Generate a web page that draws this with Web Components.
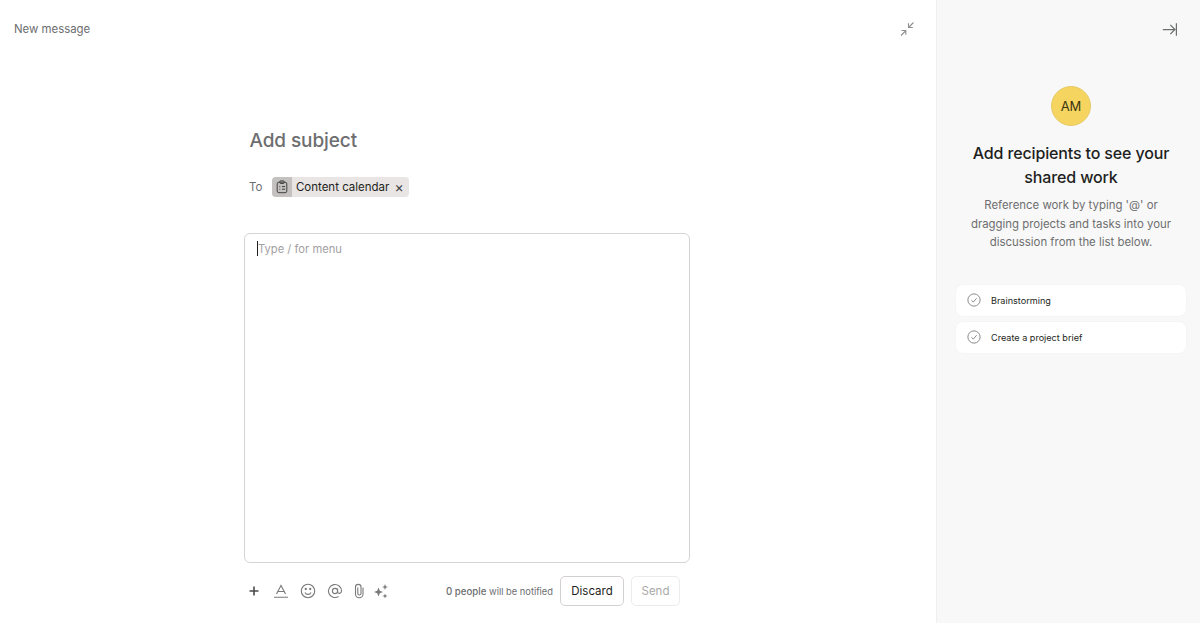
<!DOCTYPE html>
<html>
<head>
<meta charset="utf-8">
<title>New message</title>
<style>
    html, body { margin: 0; height: 100%; }
    body { font-family: Inter, "Liberation Sans", sans-serif; color: #1e1f21; overflow: hidden; }
</style>
</head>
<body>
<message-page>
    <message-composer></message-composer>
    <recipients-panel slot="side">
        <task-row>Brainstorming</task-row>
        <task-row>Create a project brief</task-row>
    </recipients-panel>
</message-page>

<script>
const icons = {
    collapse: '<path d="M2 14.5 6.5 10M2.5 9.5H6.8V13.8M14.5 1.5 10 6M9.5 2.2V6.5H13.8"/>',
    close: '<path d="M1 9H15M10 3.5 15.5 9 10 14.5M17.3 1.5V16.5" stroke-width="1.5"/>',
    clipboard: '<rect x="2.5" y="2.5" width="11" height="12" rx="2"/><rect x="5.5" y="1" width="5" height="3" rx="1"/><path d="M5 7.5H6M8 7.5H11.5M5 10.5H6M8 10.5H11.5"/>',
    plus: '<path d="M8 3.5V12.5M3.5 8H12.5" stroke-width="1.6"/>',
    format: '<path d="M3.5 11 8 2.5 12.5 11M5 8.5H11M1 14.3H15"/>',
    smile: '<circle cx="8" cy="8" r="6.7"/><path d="M5 9.5C6 12 10 12 11 9.5"/><circle cx="5.8" cy="6" r=".6"/><circle cx="10.2" cy="6" r=".6"/>',
    at: '<circle cx="8" cy="8" r="2.6"/><path d="M10.6 5.5V9C10.6 11 14.5 11 14.5 8A6.5 6.5 0 1 0 11.5 13.5"/>',
    clip: '<path d="M12 4.5V11C12 16 4.5 16 4.5 11V4C4.5 0.5 10 0.5 10 4V10.5C10 12.5 6.8 12.5 6.8 10.5V4.5"/>',
    sparkle: '<path d="M5.5 4.5 6.8 7.7 10 9 6.8 10.3 5.5 13.5 4.2 10.3 1 9 4.2 7.7Z" fill="currentColor" stroke="none"/><path d="M12 1 12.8 3.2 15 4 12.8 4.8 12 7 11.2 4.8 9 4 11.2 3.2Z" fill="currentColor" stroke="none"/><path d="M12 10.5 12.7 12.3 14.5 13 12.7 13.7 12 15.5 11.3 13.7 9.5 13 11.3 12.3Z" fill="currentColor" stroke="none"/>',
    check: '<circle cx="8" cy="8" r="7"/><path d="M5 8.3 7.2 10.4 11 6"/>'
};

class UiIcon extends HTMLElement {
    connectedCallback() {
        const name = this.getAttribute('name');
        const size = this.getAttribute('size') || '16';
        const box = this.getAttribute('box') || '16';
        this.attachShadow({ mode: 'open' }).innerHTML = `
            <style>
                :host { display: inline-flex; flex: none; }
                svg { display: block; fill: none; stroke: currentColor; stroke-width: 1.1; }
            </style>
            <svg width="${size}" height="${size}" viewBox="0 0 ${box} ${box}">${icons[name]}</svg>
        `;
    }
}
customElements.define('ui-icon', UiIcon);

class MessagePage extends HTMLElement {
    constructor() {
        super();
        this.attachShadow({ mode: 'open' }).innerHTML = `
            <style>
                :host { display: grid; grid-template-columns: 936px 264px; height: 623px; overflow: hidden; }
                main { display: flex; flex-direction: column; min-width: 0; background: #fff; }
                header { display: flex; justify-content: space-between; align-items: center; height: 57px; padding: 0 21px 0 14px; font-size: 11.4px; color: #6d6e6f; }
                ui-icon { color: #8f8f8f; }
            </style>
            <main>
                <header><span>New message</span><ui-icon name="collapse"></ui-icon></header>
                <slot></slot>
            </main>
            <slot name="side"></slot>
        `;
    }
}
customElements.define('message-page', MessagePage);

class MessageComposer extends HTMLElement {
    constructor() {
        super();
        this.attachShadow({ mode: 'open' }).innerHTML = `
            <style>
                :host { display: flex; flex-direction: column; width: 446px; margin: 0 0 0 244px; }
                .subject { margin: 71px 0 0 5.5px; font-size: 19px; line-height: 26px; font-weight: 500; color: #6d6e6f; letter-spacing: -.1px; }
                .to { display: flex; align-items: center; gap: 10px; margin: 23px 0 0 5px; font-size: 11.5px; color: #6d6e6f; }
                .chip { display: flex; align-items: center; height: 20px; border-radius: 4px; background: #e8e5e4; color: #1e1f21; overflow: hidden; }
                .chip .badge { display: flex; align-items: center; justify-content: center; width: 20px; height: 20px; background: #c4c1c0; color: #3d3d3d; }
                .chip .label { margin-left: 3.5px; }
                .chip .x { width: 19.5px; text-align: center; font-size: 14px; line-height: 1; color: #3d3d3d; }
                .editor { height: 314px; margin-top: 36px; border: 1px solid #d4d4d4; border-radius: 6px; padding: 7px 12px 7px; font-size: 11.2px; line-height: 16px; color: #a2a0a2; }
                .caret { display: inline-block; width: 1px; height: 15px; background: #1e1f21; vertical-align: -3px; }
                .tools { display: flex; align-items: center; height: 30px; margin-top: 13px; padding: 0 10px 0 2px; color: #7a7a7a; }
                .tools ui-icon { margin-right: 11px; }
                .tools ui-icon.plus { color: #4a4a4a; }
                .tools ui-icon.at { margin-right: 8px; }
                .tools ui-icon.clip { margin-right: 6px; }
                .note { margin-left: auto; margin-right: 7px; font-size: 9.3px; color: #6d6e6f; }
                .note b { font-weight: 500; font-size: 9.7px; }
                button { font: inherit; height: 30px; border-radius: 5px; background: #fff; font-size: 11.5px; padding: 0; }
                .discard { width: 64px; border: 1px solid #d4d0d0; color: #1e1f21; }
                .send { width: 49px; margin-left: 7px; border: 1px solid #ececec; color: #a9a9a9; }
            </style>
            <div class="subject">Add subject</div>
            <div class="to">
                <span>To</span>
                <span class="chip">
                    <span class="badge"><ui-icon name="clipboard" size="14"></ui-icon></span>
                    <span class="label">Content calendar</span>
                    <span class="x">×</span>
                </span>
            </div>
            <div class="editor"><span class="caret"></span>Type / for menu</div>
            <div class="tools">
                <ui-icon class="plus" name="plus" size="16"></ui-icon>
                <ui-icon name="format" size="16"></ui-icon>
                <ui-icon name="smile" size="16"></ui-icon>
                <ui-icon class="at" name="at" size="16"></ui-icon>
                <ui-icon class="clip" name="clip" size="16"></ui-icon>
                <ui-icon name="sparkle" size="16"></ui-icon>
                <span class="note"><b>0 people</b> will be notified</span>
                <button class="discard">Discard</button>
                <button class="send">Send</button>
            </div>
        `;
    }
}
customElements.define('message-composer', MessageComposer);

class RecipientsPanel extends HTMLElement {
    constructor() {
        super();
        this.attachShadow({ mode: 'open' }).innerHTML = `
            <style>
                :host { display: flex; flex-direction: column; align-items: center; background: #f8f8f8; border-left: 1px solid #efefef; padding: 0 14px 0 19px; }
                .top { align-self: flex-end; display: flex; height: 58px; align-items: center; color: #6d6e6f; margin-right: 9px; }
                .avatar { display: flex; align-items: center; justify-content: center; width: 40px; height: 40px; margin-top: 28px; border-radius: 50%; background: #f5d55f; border: 1px solid #e6cb6b; font-size: 13px; color: #3b3410; box-sizing: border-box; }
                h2 { margin: 15px 0 0; font-size: 16px; line-height: 24px; font-weight: 500; text-align: center; color: #1e1f21; letter-spacing: -.14px; width: 210px; }
                p { margin: 7px 0 0; font-size: 11.4px; line-height: 18.5px; text-align: center; color: #6d6e6f; width: 210px; }
                .list { display: flex; flex-direction: column; gap: 6px; align-self: stretch; margin-top: 33px; }
            </style>
            <div class="top"><ui-icon name="close" size="15" box="18"></ui-icon></div>
            <div class="avatar">AM</div>
            <h2>Add recipients to see your shared work</h2>
            <p>Reference work by typing '@' or dragging projects and tasks into your discussion from the list below.</p>
            <div class="list"><slot></slot></div>
        `;
    }
}
customElements.define('recipients-panel', RecipientsPanel);

class TaskRow extends HTMLElement {
    constructor() {
        super();
        this.attachShadow({ mode: 'open' }).innerHTML = `
            <style>
                :host { display: flex; align-items: center; gap: 10px; height: 31px; padding: 0 11px; background: #fff; border-radius: 7px; box-shadow: 0 0 2px rgba(0,0,0,.05); font-size: 9.1px; color: #1e1f21; }
                ui-icon { color: #858585; }
            </style>
            <ui-icon name="check" size="14"></ui-icon>
            <slot></slot>
        `;
    }
}
customElements.define('task-row', TaskRow);
</script>
</body>
</html>
